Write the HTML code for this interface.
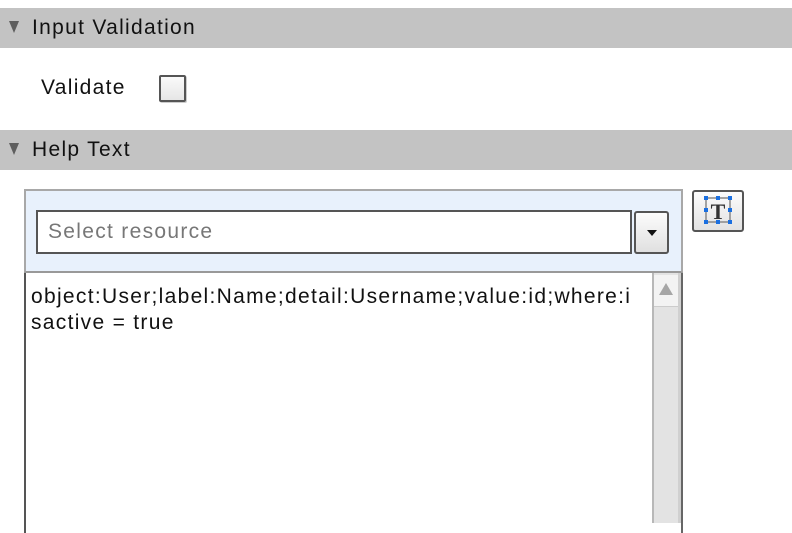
<!DOCTYPE html>
<html><head><style>
*{margin:0;padding:0;box-sizing:border-box}
body{width:792px;height:520px;overflow:hidden;background:#fff;font-family:"Liberation Sans",Arial,sans-serif;position:relative;color:#111;font-size:21px;letter-spacing:1.3px}
.hdr{position:absolute;left:0;width:792px;height:40px;background:#c3c3c3;line-height:40px;padding-left:32px}
.tri{position:absolute;left:9px;top:13px;width:0;height:0;border-left:5px solid transparent;border-right:5px solid transparent;border-top:12px solid #5e5e5e}
</style></head><body>
<div class="hdr" style="top:8px"><div class="tri"></div>Input Validation</div>
<div style="position:absolute;left:41px;top:76px">Validate</div>
<div style="position:absolute;left:159px;top:75px;width:27px;height:27px;border:2px solid #555;background:linear-gradient(#fafafa,#e6e6e6);border-radius:2px;box-shadow:1px 1px 0 #ccc"></div>
<div class="hdr" style="top:130px"><div class="tri"></div>Help Text</div>

<div style="position:absolute;left:24px;top:189px;width:659px;height:84px;background:#e8f1fc;border:2px solid #a8a8a8;border-bottom:2px solid #999"></div>
<div style="position:absolute;left:36px;top:210px;width:596px;height:44px;background:#fff;border:2px solid #555;color:#777;padding-left:10px;line-height:40px">Select resource</div>
<div style="position:absolute;left:634px;top:211px;width:35px;height:43px;border:2px solid #555;border-radius:3px;background:linear-gradient(#fcfcfc,#e0e0e0)"><div style="position:absolute;left:11px;top:17px;border-left:5px solid transparent;border-right:5px solid transparent;border-top:6px solid #111"></div></div>

<div style="position:absolute;left:692px;top:190px;width:52px;height:42px;border:2px solid #555;border-radius:3px;background:linear-gradient(#fcfcfc,#e2e2e2)">
<svg width="48" height="38" style="position:absolute;left:0;top:0"><rect x="12" y="6" width="24" height="24" fill="none" stroke="#888" stroke-width="1.5"/>
<text x="24" y="27" text-anchor="middle" font-family="Liberation Serif,serif" font-weight="bold" font-size="22" fill="#333" letter-spacing="0">T</text>
<g fill="#1a6fe0"><rect x="10" y="4" width="4" height="4"/><rect x="22" y="4" width="4" height="4"/><rect x="34" y="4" width="4" height="4"/><rect x="10" y="16" width="4" height="4"/><rect x="34" y="16" width="4" height="4"/><rect x="10" y="28" width="4" height="4"/><rect x="22" y="28" width="4" height="4"/><rect x="34" y="28" width="4" height="4"/></g></svg></div>

<div style="position:absolute;left:24px;top:273px;width:659px;height:260px;border-left:2px solid #555;border-right:2px solid #666;background:#fff"></div>
<div style="position:absolute;left:31px;top:284px;width:640px;line-height:26px;white-space:nowrap">object:User;label:Name;detail:Username;value:id;where:i<br>sactive = true</div>
<div style="position:absolute;left:652px;top:273px;width:29px;height:250px;background:#e3e3e3;border-left:2px solid #b8b8b8;border-right:3px solid #d0d0d0"></div>
<div style="position:absolute;left:654px;top:275px;width:24px;height:32px;background:#f3f3f3;border-bottom:1px solid #ccc"><div style="position:absolute;left:5px;top:8px;border-left:7px solid transparent;border-right:7px solid transparent;border-bottom:12px solid #a6a6a6"></div></div>
</body></html>
